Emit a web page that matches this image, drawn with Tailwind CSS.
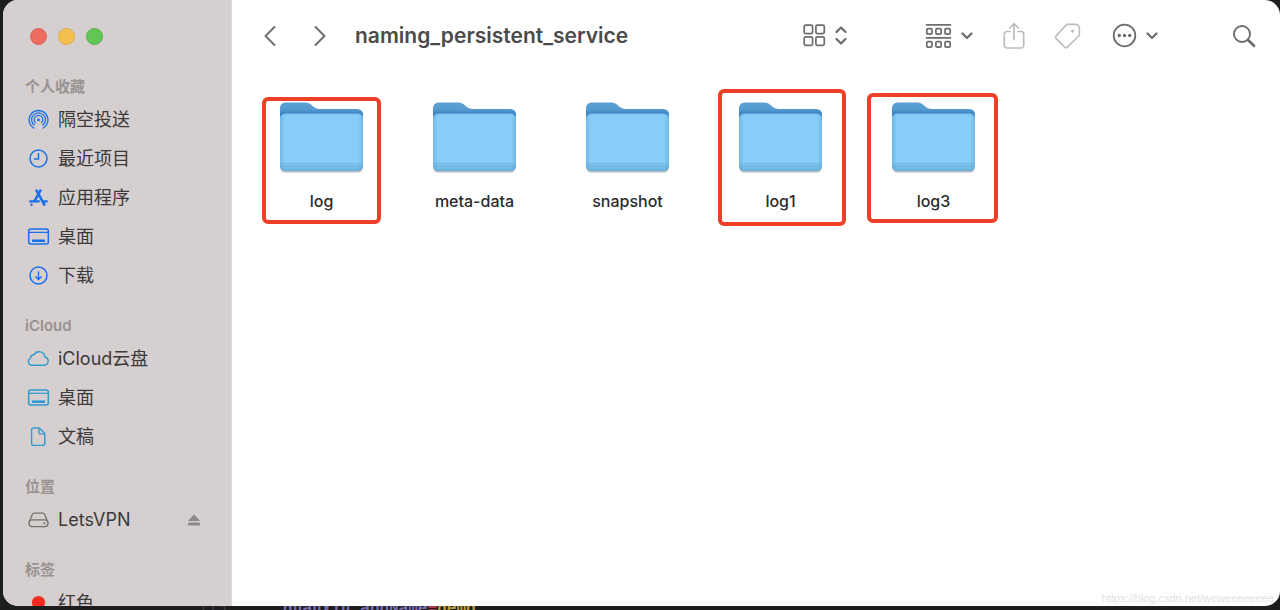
<!DOCTYPE html>
<html lang="zh-CN">
<head>
  <meta charset="UTF-8" />
  <meta name="viewport" content="width=device-width, initial-scale=1.0"/>
  <title>naming_persistent_service</title>
  <script src="https://cdn.jsdelivr.net/npm/@tailwindcss/browser@4"></script>
</head>
<body class="antialiased">
  <div id="root"></div>

  <script>
    // Sidebar icons
    const desktopIcon = `
      <rect x="1.7" y="4.1" width="19.6" height="15" rx="2" stroke-width="1.5"/>
      <path d="M2 7.3h19" stroke-width="1.2"/>
      <path d="M5 15.7h13" stroke-width="2.6"/>`;

    const icons = {
      airdrop: `
        <g stroke-width="1.3">
          <path d="M7.3 20.3a9.4 9.4 0 1 1 8.4 0"/>
          <path d="M7.6 17.4a6.9 6.9 0 1 1 7.8 0"/>
          <path d="M8.7 14.9a4.3 4.3 0 1 1 5.6 0"/>
        </g>
        <circle cx="11.5" cy="11.9" r="1.4" fill="currentColor" stroke="none"/>`,
      recents: `
        <circle cx="11.5" cy="11.5" r="8.5" stroke-width="1.5"/>
        <path d="M11.5 6v6H7" stroke-width="1.5"/>`,
      apps: `
        <path d="M9 3.600l8.900 16M14 3.600L7.100 15.600" stroke-width="2.600"/>
        <path d="M2.300 15.300h10.400M15.800 15.300h4.900" stroke-width="2.200"/>
        <path d="M5 17.800l-1 1.800" stroke-width="2.200"/>`,
      desktop: desktopIcon,
      downloads: `
        <circle cx="11.5" cy="11.5" r="8.5" stroke-width="1.5"/>
        <path d="M11.5 7.3v8M8.4 12.4l3.1 3.1 3.1-3.1" stroke-width="1.4"/>`,
      cloud: `
        <path d="M5.6 18.2h11.6a4.1 4.1 0 0 0 .8-8.1A5.9 5.9 0 0 0 7 7.8a3.7 3.7 0 0 0-3.500 3.600 3.600 3.600 0 0 0 2.100 6.800z" stroke-width="1.4"/>`,
      document: `
        <path d="M6.6 3h5.6l5.6 5.6v9.8a2 2 0 0 1-2 2H6.6a2 2 0 0 1-2-2V5a2 2 0 0 1 2-2z" stroke-width="1.4"/>
        <path d="M12 3.2v4.4a1.3 1.3 0 0 0 1.3 1.3h4.3" stroke-width="1.4"/>`,
      drive: `
        <rect x="2" y="11.8" width="19" height="6.8" rx="3" stroke-width="1.3"/>
        <path d="M2.4 13.7L5.3 6.4a2 2 0 0 1 1.9-1.2h8.6a2 2 0 0 1 1.9 1.2l2.900 7.300" stroke-width="1.3"/>
        <circle cx="17.4" cy="15.3" r="1" fill="currentColor" stroke="none"/>`,
      redTag: `<circle cx="11.5" cy="11.5" r="6.6" fill="currentColor" stroke="none"/>`,
    };

    const sections = [
      { title: '个人收藏', items: [
        { label: '隔空投送', icon: 'airdrop', color: 'text-[#1a70ea]' },
        { label: '最近项目', icon: 'recents', color: 'text-[#1a70ea]' },
        { label: '应用程序', icon: 'apps', color: 'text-[#1a70ea]' },
        { label: '桌面', icon: 'desktop', color: 'text-[#1a70ea]' },
        { label: '下载', icon: 'downloads', color: 'text-[#1a70ea]' },
      ]},
      { title: 'iCloud', items: [
        { label: 'iCloud云盘', icon: 'cloud', color: 'text-[#2f9bd0]' },
        { label: '桌面', icon: 'desktop', color: 'text-[#2f9bd0]' },
        { label: '文稿', icon: 'document', color: 'text-[#2f9bd0]' },
      ]},
      { title: '位置', items: [
        { label: 'LetsVPN', icon: 'drive', color: 'text-[#77726f]', eject: true },
      ]},
      { title: '标签', items: [
        { label: '红色', icon: 'redTag', color: 'text-[#f32c22]' },
      ]},
    ];

    // mark: red frame drawn over the folder
    const folders = [
      { name: 'log', mark: 'left-[17px] top-[9px] w-[119px] h-[127px]' },
      { name: 'meta-data' },
      { name: 'snapshot' },
      { name: 'log1', mark: 'left-[14px] top-[1px] w-[128px] h-[137px]' },
      { name: 'log3', mark: 'left-[10px] top-[5px] w-[131px] h-[130px]' },
    ];

    function createSidebarItem(item) {
      return `
        <li class="flex h-[39px] items-center pr-[30px]">
          <a href="#" class="flex flex-1 items-center gap-2">
            <svg class="size-[23px] ${item.color}" viewBox="0 0 23 23" fill="none" stroke="currentColor" stroke-linejoin="round">${icons[item.icon]}</svg>
            <span>${item.label}</span>
          </a>
          ${item.eject ? `
            <button aria-label="推出" class="text-[#8f8989]">
              <svg class="h-[14px] w-[14px]" viewBox="0 0 14 14" fill="currentColor"><path d="M7 1.2L13 8H1z"/><rect x="1" y="9.4" width="12" height="3.2" rx=".5"/></svg>
            </button>` : ''}
        </li>`;
    }

    function createSidebar() {
      return `
        <aside class="flex w-[229px] shrink-0 flex-col overflow-hidden border-r border-[#dfdada] bg-[#d5cfcf] text-lg text-[#3b3939]">
          <div class="flex h-[72px] shrink-0 items-center gap-[11px] pl-[27px]">
            <button aria-label="关闭" class="size-[17px] rounded-full border border-[#d86459] bg-[#ed6b60]"></button>
            <button aria-label="最小化" class="size-[17px] rounded-full border border-[#dcab4e] bg-[#f5bf4f]"></button>
            <button aria-label="缩放" class="size-[17px] rounded-full border border-[#5bb04c] bg-[#62c655]"></button>
          </div>
          <nav class="flex flex-col gap-[18px] pt-0.5">
            ${sections.map(section => `
              <section>
                <h2 class="h-[26px] pl-[22px] text-[15px] leading-[26px] font-semibold text-[#989292]">${section.title}</h2>
                <ul class="pl-6">${section.items.map(createSidebarItem).join('')}</ul>
              </section>`).join('')}
          </nav>
        </aside>`;
    }

    function chevron() {
      return `<svg class="h-[23px] w-[12px]" viewBox="0 0 12 23" stroke-width="2.3"><path d="M1.5 9.5L6 14l4.5-4.5"/></svg>`;
    }

    function createToolbar() {
      return `
        <header class="flex h-[71px] shrink-0 items-center pr-6 pl-[30px] text-[#6d6d6d]">
          <button aria-label="返回">
            <svg class="h-6 w-4" viewBox="0 0 16 24" stroke-width="2"><path d="M12.5 3L3.5 12l9 9"/></svg>
          </button>
          <button aria-label="前进" class="ml-[34px]">
            <svg class="h-6 w-4" viewBox="0 0 16 24" stroke-width="2"><path d="M3.5 3l9 9-9 9"/></svg>
          </button>
          <h1 class="ml-[27px] flex-1 text-[21px] leading-7 font-semibold text-[#4b4b4b]">naming_persistent_service</h1>
          <button aria-label="图标显示" class="flex items-center gap-2">
            <svg class="size-[23px]" viewBox="0 0 23 23" stroke-width="1.7">
              <rect x="1.2" y="1.2" width="8.4" height="8.4" rx="1.5"/><rect x="12.9" y="1.2" width="8.4" height="8.4" rx="1.5"/>
              <rect x="1.2" y="12.9" width="8.4" height="8.4" rx="1.5"/><rect x="12.9" y="12.9" width="8.4" height="8.4" rx="1.5"/>
            </svg>
            <svg class="h-[23px] w-[14px]" viewBox="0 0 14 23" stroke-width="2.3"><path d="M2.5 8L7 3.5 11.5 8M2.5 15L7 19.5l4.5-4.5"/></svg>
          </button>
          <button aria-label="分组" class="ml-[77px] flex items-center gap-[9px]">
            <svg class="h-[26px] w-[27px]" viewBox="0 0 27 26" stroke-width="1.7">
              <path d="M1.5 1.8h24M1.5 14.8h24"/>
              <rect x="1.8" y="5.6" width="5.2" height="5.6" rx="1.2"/><rect x="10.9" y="5.6" width="5.2" height="5.6" rx="1.2"/><rect x="20" y="5.6" width="5.2" height="5.6" rx="1.2"/>
              <rect x="1.8" y="18.6" width="5.2" height="5.6" rx="1.2"/><rect x="10.9" y="18.6" width="5.2" height="5.6" rx="1.2"/><rect x="20" y="18.6" width="5.2" height="5.6" rx="1.2"/>
            </svg>
            ${chevron()}
          </button>
          <button aria-label="共享" class="ml-[30px] text-[#bdbdbd]">
            <svg class="h-[28px] w-[22px]" viewBox="0 0 22 28" stroke-width="1.7">
              <path d="M7 9.5H3.8A2.500 2.500 0 0 0 1.300 12v11.500A2.500 2.500 0 0 0 3.800 26h14.400a2.500 2.500 0 0 0 2.500-2.500V12a2.500 2.500 0 0 0-2.500-2.500H15"/>
              <path d="M11 17.5V2M6.7 6L11 1.7 15.3 6"/>
            </svg>
          </button>
          <button aria-label="标签" class="ml-[29px] text-[#bdbdbd]">
            <svg class="h-[27px] w-[27px]" viewBox="0 0 28 28" stroke-width="1.7">
              <path d="M14.3 2.4H23a2 2 0 0 1 1.4.6l1.3 1.4a2 2 0 0 1 .6 1.4v7a2.5 2.5 0 0 1-.7 1.7L14 26a2 2 0 0 1-2.800 0L2.200 17.200a2 2 0 0 1 0-2.800L12.500 3.200a2.500 2.500 0 0 1 1.800-.8z"/>
              <circle cx="19.2" cy="9.4" r="1.7" fill="currentColor" stroke="none"/>
            </svg>
          </button>
          <button aria-label="更多" class="ml-[31px] flex items-center gap-[9px]">
            <svg class="size-[25px]" viewBox="0 0 25 25" stroke-width="1.8">
              <circle cx="12.5" cy="12.5" r="10.8"/>
              <g fill="currentColor" stroke="none"><circle cx="7.3" cy="12.5" r="1.7"/><circle cx="12.5" cy="12.5" r="1.7"/><circle cx="17.7" cy="12.5" r="1.7"/></g>
            </svg>
            ${chevron()}
          </button>
          <button aria-label="搜索" class="ml-[74px]">
            <svg class="size-[24px]" viewBox="0 0 24 24"><circle cx="10" cy="10" r="8" stroke-width="1.9"/><path d="M16 16l6 5.7" stroke-width="2.7"/></svg>
          </button>
        </header>`;
    }

    function createFolder(folder) {
      return `
        <li class="relative w-[153px]">
          <button class="flex w-full flex-col items-center gap-[14px] pt-[13px]">
            <svg class="h-[74px] w-[87px]" viewBox="0 0 87 74"><use href="#folder"/></svg>
            <span class="text-base leading-6 font-medium text-[#2b2b2b]">${folder.name}</span>
          </button>
          ${folder.mark ? `<div class="pointer-events-none absolute rounded-md border-4 border-[#ec4027] ${folder.mark}"></div>` : ''}
        </li>`;
    }

    function render() {
      document.getElementById('root').innerHTML = `
        <svg class="absolute size-0" aria-hidden="true">
          <defs>
            <linearGradient id="back" x1="0" y1="0" x2="0" y2="1">
              <stop offset="0" stop-color="#5ba1d4"/><stop offset=".14" stop-color="#559bd0"/><stop offset=".24" stop-color="#3a84c5"/>
            </linearGradient>
            <linearGradient id="front" x1="0" y1="0" x2="0" y2="1">
              <stop offset="0" stop-color="#7dc3ee"/><stop offset=".05" stop-color="#88cdf7"/><stop offset=".86" stop-color="#88cdf7"/>
              <stop offset=".89" stop-color="#7ac0ea"/><stop offset=".93" stop-color="#79bfe8"/><stop offset="1" stop-color="#68b0df"/>
            </linearGradient>
            <linearGradient id="sides">
              <stop offset="0" stop-color="#4d9cd0" stop-opacity=".4"/><stop offset=".06" stop-color="#4d9cd0" stop-opacity="0"/>
              <stop offset=".94" stop-color="#4d9cd0" stop-opacity="0"/><stop offset="1" stop-color="#4d9cd0" stop-opacity=".4"/>
            </linearGradient>
            <g id="folder">
              <rect x="2" y="14" width="83" height="57.5" rx="5.5" fill="#78838c" opacity=".55"/>
              <path d="M2 7a5.5 5.500 0 0 1 5.500-5.500H27c3 0 5 1.200 7.300 3.200C37 7 39 8 42 8h37.500A5.500 5.500 0 0 1 85 13.500V50H2z" fill="url(#back)"/>
              <rect x="2" y="12.5" width="83" height="57.5" rx="5.5" fill="url(#front)"/>
              <rect x="2" y="12.5" width="83" height="57.5" rx="5.5" fill="url(#sides)"/>
              <path d="M3 62.5h81M3 65.5h81" stroke="#65acd8" stroke-width=".5"/>
            </g>
          </defs>
        </svg>
        <div class="flex h-screen flex-col overflow-hidden bg-[#1d1c1f] font-[Inter,'Noto_Sans_CJK_SC',sans-serif]">
          <div class="ml-[3px] flex min-h-0 flex-1 overflow-hidden rounded-[15px] bg-white">
            ${createSidebar()}
            <main class="flex min-w-0 flex-1 flex-col [&_header_svg]:fill-none [&_header_svg]:stroke-current [&_header_svg]:[stroke-linecap:round] [&_header_svg]:[stroke-linejoin:round]">
              ${createToolbar()}
              <ul class="flex flex-1 flex-wrap content-start pt-[17px] pl-[13px]">${folders.map(createFolder).join('')}</ul>
              <p class="pr-[6px] text-right font-['Liberation_Sans',sans-serif] text-[11px] leading-4 text-[#e2e2e2]">https://blog.csdn.net/weweeeeeeee</p>
            </main>
          </div>
          <!-- editor line showing below the window -->
          <div class="flex h-1 shrink-0 items-center overflow-hidden bg-[#1d1c1f] pl-[198px] font-['DejaVu_Sans_Mono',monospace] text-base leading-4 font-bold">
            <span class="w-[85px] font-normal text-[#3b3a3d]">115</span>
            <span class="text-[#786cae]">quanxin.appName</span><span class="text-[#b8435c]">=</span><span class="text-[#b59b3f]">demo</span>
          </div>
        </div>`;
    }

    render();
  </script>
</body>
</html>
